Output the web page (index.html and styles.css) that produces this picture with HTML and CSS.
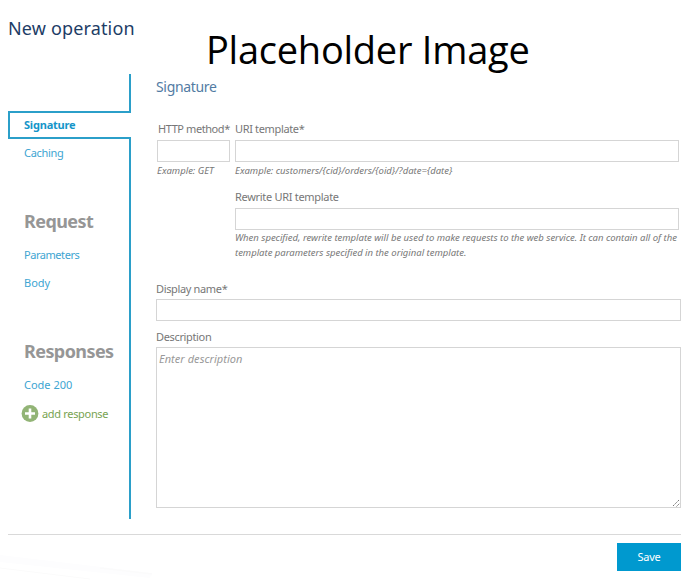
FILE: index.html
```html
<!DOCTYPE html>
<html lang="en">
<head>
<meta charset="utf-8">
<title>New operation</title>
<link rel="stylesheet" href="styles.css">
</head>
<body>
<header class="header">
  <h1 class="title"><span>New operation</span></h1>
  <div class="watermark"><span>Placeholder Image</span></div>
</header>
<main class="main">
  <nav class="sidebar">
    <div class="rail-top"></div>
    <a class="tab"><span>Signature</span></a>
    <div class="rail">
      <a class="link caching"><span>Caching</span></a>
      <h2 class="group request"><span>Request</span></h2>
      <a class="link parameters"><span>Parameters</span></a>
      <a class="link"><span>Body</span></a>
      <h2 class="group responses"><span>Responses</span></h2>
      <a class="link code"><span>Code 200</span></a>
      <a class="add">
        <svg width="18" height="18" viewBox="0 0 18 18"><circle cx="9" cy="9.5" r="8.4" fill="#92b476"/><path d="M9 4.5v10M4 9.5h10" stroke="#fff" stroke-width="2.6"/></svg>
        <span>add response</span>
      </a>
    </div>
  </nav>
  <form class="form">
    <h2 class="heading"><span>Signature</span></h2>
    <div class="uri-grid">
      <div class="field">
        <label class="label method-label"><span>HTTP method*</span></label>
        <div class="input"></div>
        <p class="hint get-hint"><span>Example: GET</span></p>
      </div>
      <div class="field">
        <label class="label"><span>URI template*</span></label>
        <div class="input"></div>
        <p class="hint"><span>Example: customers/{cid}/orders/{oid}/?date={date}</span></p>
        <label class="label rewrite"><span>Rewrite URI template</span></label>
        <div class="input"></div>
        <p class="hint long"><span>When specified, rewrite template will be used to make requests to the web service. It can contain all of the</span><br><span>template parameters specified in the original template.</span></p>
      </div>
    </div>
    <label class="label display"><span>Display name*</span></label>
    <div class="input"></div>
    <label class="label description"><span>Description</span></label>
    <div class="textarea">
      <span class="placeholder">Enter description</span>
      <svg class="grip" width="8" height="8" viewBox="0 0 8 8"><path d="M1 7L7 1M4.5 7.5L7.5 4.5" stroke="#777" stroke-dasharray="1.6 .7"/></svg>
    </div>
  </form>
</main>
<footer class="footer">
  <svg class="streak" width="154" height="30" viewBox="0 0 154 30"><path d="M0 5L152 23L150 28L0 12Z" fill="#fdfdfe"/><path d="M0 18L90 29M100 18L152 24" stroke="#fbfbfb" fill="none"/></svg>
  <button class="save" type="button"><span>Save</span></button>
</footer>
</body>
</html>
```
FILE: styles.css
```css
* { box-sizing: border-box; }
body {
  margin: 0;
  width: 700px;
  height: 580px;
  overflow: hidden;
  background: #fff;
  color: #777;
  font-family: "Noto Sans", "Open Sans", sans-serif;
  font-size: 11px;
}
h1, h2, p { margin: 0; }
span { white-space: nowrap; }
.header { display: flex; height: 74px; padding-left: 8px; }
.title { width: 198px; padding-top: 14px; font-size: 18px; line-height: 28px; font-weight: 400; letter-spacing: 0.15px; color: #1d3d66; }
.watermark { padding-top: 24px; font-family: "Open Sans", sans-serif; font-size: 38px; line-height: 50px; letter-spacing: -0.25px; color: #000; }
.main { display: flex; height: 445px; padding-left: 8px; }
.sidebar { display: flex; flex-direction: column; width: 123px; }
.rail-top { height: 37px; border-right: 2px solid #2b9fc9; }
.tab { height: 28px; padding-left: 14px; border: 2px solid #2b9fc9; border-right: 0; font-weight: 700; font-size: 11px; line-height: 24px; letter-spacing: -0.2px; color: #1495c9; }
.rail { flex: 1; padding-left: 16px; border-right: 2px solid #2b9fc9; }
.link { display: block; height: 28px; line-height: 28px; color: #40a5d2; }
.caching { letter-spacing: -0.3px; }
.parameters { letter-spacing: -0.45px; }
.group { height: 30px; line-height: 30px; font-size: 18px; font-weight: 700; letter-spacing: -0.58px; color: #969696; }
.request { margin: 39px 0 5px; }
.responses { margin: 39px 0 5px; }
.add { display: flex; align-items: center; gap: 3px; height: 28px; margin-left: -3px; letter-spacing: -0.32px; color: #78a351; }
.form { width: 525px; margin-left: 25px; }
.heading { height: 25px; line-height: 25px; font-size: 14px; font-weight: 400; letter-spacing: -0.33px; color: #527ba3; }
.uri-grid { display: grid; grid-template-columns: 73px 444px; gap: 5px; height: 182px; padding: 20px 0 0 1px; }
.label { display: block; height: 20px; line-height: 20px; letter-spacing: -0.35px; }
.uri-grid .label { height: 21px; }
.method-label { padding-left: 1px; letter-spacing: -0.42px; }
.input { height: 22px; border: 1px solid #d5d5d5; }
.hint { height: 17px; line-height: 17px; font-size: 9.5px; font-style: italic; color: #777; }
.uri-grid .rewrite { margin-top: 8px; letter-spacing: -0.3px; }
.long { height: 30px; line-height: 15px; letter-spacing: -0.01px; }
.display { margin-top: -2px; }
.description { margin-top: 6px; }
.textarea { position: relative; height: 161px; padding: 0 2px; border: 1px solid #d5d5d5; }
.placeholder { line-height: 22px; font-style: italic; letter-spacing: 0.05px; color: #999; }
.grip { position: absolute; right: 0; bottom: 0; }
.footer { position: relative; display: flex; justify-content: flex-end; height: 46px; margin: 15px 19px 0 8px; padding-top: 8px; border-top: 1px solid #d9d9d9; }
.streak { position: absolute; left: -8px; bottom: 0; }
.save { width: 64px; height: 28px; padding: 0; border: 0; background: #0099cf; color: #fff; font: 11px/28px "Noto Sans", sans-serif; letter-spacing: -0.2px; }
```
